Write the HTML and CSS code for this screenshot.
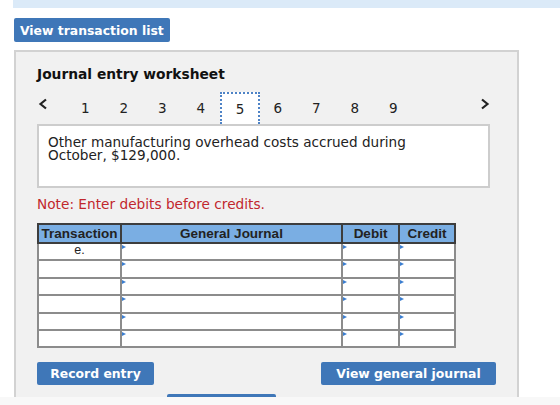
FILE: index.html
```html
<!DOCTYPE html>
<html>
<head>
<meta charset="utf-8">
<link rel="stylesheet" href="styles.css">
</head>
<body>
<div class="topstrip"></div>
<div class="toolbar">
  <button class="btn">View transaction list</button>
</div>
<div class="panel">
  <h2 class="title">Journal entry worksheet</h2>
  <div class="nav">
    <span class="chev prev"><svg width="10" height="12" viewBox="0 0 10 12"><polyline points="8,1.5 2.5,6 8,10.5" fill="none" stroke="#222" stroke-width="2.2"/></svg></span>
    <span class="tab">1</span>
    <span class="tab">2</span>
    <span class="tab">3</span>
    <span class="tab">4</span>
    <span class="tab active">5</span>
    <span class="tab">6</span>
    <span class="tab">7</span>
    <span class="tab">8</span>
    <span class="tab">9</span>
    <span class="spacer"></span>
    <span class="chev next"><svg width="10" height="12" viewBox="0 0 10 12"><polyline points="2,1.5 7.5,6 2,10.5" fill="none" stroke="#222" stroke-width="2.2"/></svg></span>
  </div>
  <div class="desc">Other manufacturing overhead costs accrued during October, $129,000.</div>
  <p class="note">Note: Enter debits before credits.</p>
  <table class="journal">
    <colgroup><col class="c1"><col class="c2"><col class="c3"><col class="c4"></colgroup>
    <thead>
      <tr><th>Transaction</th><th>General Journal</th><th>Debit</th><th>Credit</th></tr>
    </thead>
    <tbody>
      <tr><td class="tr">e.</td><td class="in"></td><td class="in"></td><td class="in"></td></tr>
      <tr><td class="tr"></td><td class="in"></td><td class="in"></td><td class="in"></td></tr>
      <tr><td class="tr"></td><td class="in"></td><td class="in"></td><td class="in"></td></tr>
      <tr><td class="tr"></td><td class="in"></td><td class="in"></td><td class="in"></td></tr>
      <tr><td class="tr"></td><td class="in"></td><td class="in"></td><td class="in"></td></tr>
      <tr><td class="tr"></td><td class="in"></td><td class="in"></td><td class="in"></td></tr>
    </tbody>
  </table>
  <div class="actions">
    <button class="btn btn-record">Record entry</button>
    <button class="btn btn-view">View general journal</button>
  </div>
  <div class="clipped-btn"></div>
</div>
<div class="footer"></div>
</body>
</html>
```
FILE: styles.css
```css
* { box-sizing: border-box; }
html, body { margin: 0; padding: 0; background: #fff; }
body { font-family: "DejaVu Sans", Verdana, sans-serif; font-size: 13.7px; color: #222; width: 560px; height: 405px; overflow: hidden; }

.topstrip { margin-left: 13px; height: 8px; background: #dbeaf8; }

.toolbar { padding: 10px 0 0 14px; height: 42px; }

.btn {
  display: inline-flex; align-items: center; justify-content: center;
  height: 24px; padding: 0 6px; border: none; border-radius: 2px;
  background: #3f77b8; color: #fff;
  font-family: "DejaVu Sans", Verdana, sans-serif; font-weight: bold; font-size: 12.4px;
  cursor: pointer;
}

.panel {
  margin-left: 14px; width: 505px; height: 347px; overflow: hidden;
  background: #f1f1f1; border: 2px solid #d2d2d2; border-bottom: none;
  padding: 0 0 0 21px;
}

.title { margin: 14px 0 0 0; font-size: 13.8px; line-height: 16px; font-weight: bold; color: #111; }

.nav { display: flex; align-items: stretch; height: 32px; margin-top: 10px; width: 455px; }
.chev { display: flex; align-items: flex-start; padding-top: 6px; }
.prev { width: 29px; padding-left: 1px; }
.spacer { flex: 1; }
.next { width: 12px; }
.tab { width: 38.5px; display: flex; align-items: center; justify-content: center; font-size: 13.5px; color: #222; }
.tab.active { width: 40px; margin-right: -1.5px; background: #fff; border: 2px dotted #4e83c6; border-bottom: none; }

.desc {
  width: 453px; height: 64px; background: #fff; border: 2px solid #cdcdcd;
  padding: 10px 50px 8px 9px; font-size: 13.6px; line-height: 12.5px; color: #222;
}

.note { margin: 7px 0 0 0; line-height: 18px; color: #c1272d; font-size: 13.7px; }

.journal { margin-top: 10px; border-collapse: collapse; width: 417px; table-layout: fixed; font-family: "Liberation Sans", Arial, sans-serif; }
.c1 { width: 83px; } .c2 { width: 221px; } .c3 { width: 57px; } .c4 { width: 56px; }
.journal th {
  height: 19px; padding: 0; background: #7aaee3; color: #222;
  font-weight: bold; font-size: 13.5px; border: 2px solid #3d3d3d; text-align: center;
}
.journal td { height: 17.4px; padding: 0; background: #fff; border: 2px solid #8c8c8c; }
.journal td.tr { text-align: center; font-size: 12.5px; line-height: 12px; color: #222; vertical-align: top; }
.journal td.in { position: relative; }
.journal td.in::before {
  content: ""; position: absolute; left: 0; top: 1px;
  border-left: 4px solid #3b7ed0; border-top: 2.5px solid transparent; border-bottom: 2.5px solid transparent;
}

.actions { display: flex; justify-content: space-between; width: 459px; margin-top: 14px; }
.btn-record { width: 117px; height: 23px; }
.btn-view { width: 175px; height: 23px; }

.clipped-btn { margin: 9px 0 0 130px; width: 109px; height: 6px; background: #3f77b8; border-radius: 2px; }

.footer { height: 8px; background: #f8f8f8; }
```
